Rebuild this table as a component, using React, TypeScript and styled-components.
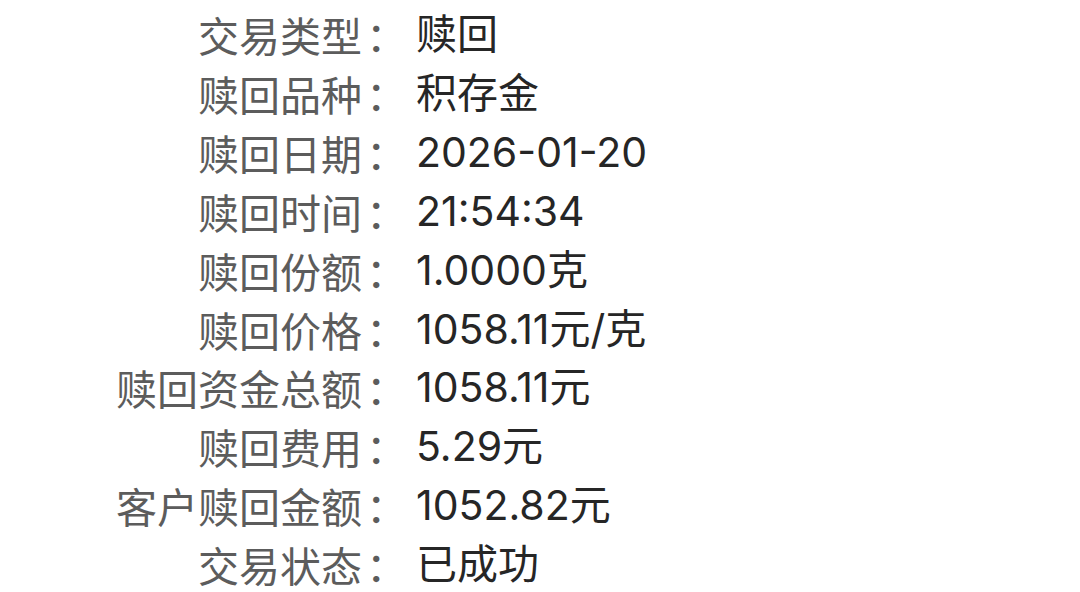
import React from "react";
import styled, { createGlobalStyle } from "styled-components";

const Global = createGlobalStyle`
  html, body { margin: 0; padding: 0; background: #ffffff; overflow: hidden; }
  body { font-family: "Noto Sans CJK SC", "Noto Sans", sans-serif; }
`;

const List = styled.div`
  display: grid;
  grid-template-columns: 403px 1fr;
  column-gap: 13px;
  padding-top: 5px;
  width: 1080px;
  box-sizing: border-box;
`;

const Label = styled.div`
  text-align: right;
  font-size: 41px;
  line-height: 58.9px;
  color: #5c5c5c;
  white-space: nowrap;
`;

const Colon = styled.span`
  margin-left: 4px;
  margin-right: -4px;
`;

const Value = styled.div`
  font-family: Inter, "Noto Sans CJK SC", sans-serif;
  font-size: 41px;
  line-height: 58.9px;
  color: #262626;
  white-space: nowrap;
`;

const rows: [string, string][] = [
  ["交易类型", "赎回"],
  ["赎回品种", "积存金"],
  ["赎回日期", "2026-01-20"],
  ["赎回时间", "21:54:34"],
  ["赎回份额", "1.0000克"],
  ["赎回价格", "1058.11元/克"],
  ["赎回资金总额", "1058.11元"],
  ["赎回费用", "5.29元"],
  ["客户赎回金额", "1052.82元"],
  ["交易状态", "已成功"],
];

export default function App() {
  return (
    <>
      <Global />
      <List>
        {rows.map(([l, v]) => (
          <React.Fragment key={l}>
            <Label>
              {l}
              <Colon>：</Colon>
            </Label>
            <Value>{v}</Value>
          </React.Fragment>
        ))}
      </List>
    </>
  );
}
